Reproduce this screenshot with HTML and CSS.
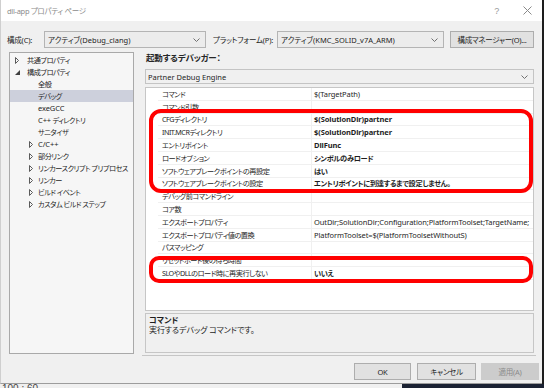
FILE: index.html
```html
<!DOCTYPE html>
<html lang="ja">
<head>
<meta charset="utf-8">
<title>dll-app プロパティ ページ</title>
<link rel="stylesheet" href="styles.css">
</head>
<body>
<div class="screen">
  <div class="dialog">
    <div class="titlebar">
      <span class="title">dll-app プロパティ ページ</span>
      <span class="help">?</span>
      <svg class="close" width="9" height="9" viewBox="0 0 9 9"><path d="M0.5 0.5 L8.5 8.5 M8.5 0.5 L0.5 8.5" stroke="#8a8a8a" stroke-width="1" fill="none"/></svg>
    </div>

    <div class="config">
      <span class="lbl lbl1">構成(C):</span>
      <div class="combo c1"><span class="cb">アクティブ(Debug_clang)</span><svg width="7" height="4" viewBox="0 0 7 4"><path d="M0.5 0.5 L3.5 3.5 L6.5 0.5" stroke="#707070" fill="none"/></svg></div>
      <span class="lbl lbl2">プラットフォーム(P):</span>
      <div class="combo c2"><span class="cb">アクティブ(KMC_SOLID_v7A_ARM)</span><svg width="7" height="4" viewBox="0 0 7 4"><path d="M0.5 0.5 L3.5 3.5 L6.5 0.5" stroke="#707070" fill="none"/></svg></div>
      <button class="btn mgr">構成マネージャー(O)...</button>
    </div>

    <div class="main">
      <div class="tree">
        <div class="ti l0"><span class="tw"><svg width="4" height="7" viewBox="0 0 4 7"><path d="M0.5 0.5 L3.5 3.5 L0.5 6.5 Z" stroke="#5a5a5a" fill="none"/></svg></span><span>共通プロパティ</span></div>
        <div class="ti l0"><span class="tw"><svg width="5" height="5" viewBox="0 0 5 5"><path d="M5 0 L5 5 L0 5 Z" fill="#404040"/></svg></span><span>構成プロパティ</span></div>
        <div class="ti leaf">全般</div>
        <div class="ti leaf sel">デバッグ</div>
        <div class="ti leaf"><span class="lt">exeGCC</span></div>
        <div class="ti leaf"><span class="lt">C++</span>&nbsp;ディレクトリ</div>
        <div class="ti leaf">サニタイザ</div>
        <div class="ti l1"><span class="tw"><svg width="4" height="7" viewBox="0 0 4 7"><path d="M0.5 0.5 L3.5 3.5 L0.5 6.5 Z" stroke="#5a5a5a" fill="none"/></svg></span><span class="lt">C/C++</span></div>
        <div class="ti l1"><span class="tw"><svg width="4" height="7" viewBox="0 0 4 7"><path d="M0.5 0.5 L3.5 3.5 L0.5 6.5 Z" stroke="#5a5a5a" fill="none"/></svg></span><span>部分リンク</span></div>
        <div class="ti l1"><span class="tw"><svg width="4" height="7" viewBox="0 0 4 7"><path d="M0.5 0.5 L3.5 3.5 L0.5 6.5 Z" stroke="#5a5a5a" fill="none"/></svg></span><span>リンカースクリプト プリプロセス</span></div>
        <div class="ti l1"><span class="tw"><svg width="4" height="7" viewBox="0 0 4 7"><path d="M0.5 0.5 L3.5 3.5 L0.5 6.5 Z" stroke="#5a5a5a" fill="none"/></svg></span><span>リンカー</span></div>
        <div class="ti l1"><span class="tw"><svg width="4" height="7" viewBox="0 0 4 7"><path d="M0.5 0.5 L3.5 3.5 L0.5 6.5 Z" stroke="#5a5a5a" fill="none"/></svg></span><span>ビルド イベント</span></div>
        <div class="ti l1"><span class="tw"><svg width="4" height="7" viewBox="0 0 4 7"><path d="M0.5 0.5 L3.5 3.5 L0.5 6.5 Z" stroke="#5a5a5a" fill="none"/></svg></span><span>カスタム ビルド ステップ</span></div>
      </div>

      <div class="right">
        <div class="heading">起動するデバッガー：</div>
        <div class="combo engine"><span class="lt wide">Partner Debug Engine</span><svg width="7" height="4" viewBox="0 0 7 4"><path d="M0.5 0.5 L3.5 3.5 L6.5 0.5" stroke="#707070" fill="none"/></svg></div>
        <div class="grid">
          <div class="rows">
            <div class="row"><span class="nm">コマンド</span><span class="vl lt">$(TargetPath)</span></div>
            <div class="row"><span class="nm">コマンド引数</span><span class="vl"></span></div>
            <div class="row"><span class="nm">CFGディレクトリ</span><span class="vl lt b">$(SolutionDir)partner</span></div>
            <div class="row"><span class="nm">INIT.MCRディレクトリ</span><span class="vl lt b">$(SolutionDir)partner</span></div>
            <div class="row"><span class="nm">エントリポイント</span><span class="vl lt b">DllFunc</span></div>
            <div class="row"><span class="nm">ロードオプション</span><span class="vl b">シンボルのみロード</span></div>
            <div class="row"><span class="nm">ソフトウェアブレークポイントの再設定</span><span class="vl b">はい</span></div>
            <div class="row"><span class="nm">ソフトウェアブレークポイントの設定</span><span class="vl b">エントリポイントに到達するまで設定しません。</span></div>
            <div class="row"><span class="nm">デバッグ前コマンドライン</span><span class="vl"></span></div>
            <div class="row"><span class="nm">コア数</span><span class="vl"></span></div>
            <div class="row"><span class="nm">エクスポートプロパティ</span><span class="vl lt">OutDir;SolutionDir;Configuration;PlatformToolset;TargetName;</span></div>
            <div class="row"><span class="nm">エクスポートプロパティ値の置換</span><span class="vl lt">PlatformToolset=$(PlatformToolsetWithoutS)</span></div>
            <div class="row"><span class="nm">パスマッピング</span><span class="vl"></span></div>
            <div class="row"><span class="nm">リセットボード後の待ち時間</span><span class="vl"></span></div>
            <div class="row"><span class="nm">SLOやDLLのロード時に再実行しない</span><span class="vl b">いいえ</span></div>
          </div>
          <div class="mark mark1"></div>
          <div class="mark mark2"></div>
        </div>
        <div class="desc">
          <div class="desc-title">コマンド</div>
          <div class="desc-text">実行するデバッグ コマンドです。</div>
        </div>
      </div>
    </div>

    <div class="buttons">
      <button class="btn ok">OK</button>
      <button class="btn cancel">キャンセル</button>
      <button class="btn apply" disabled>適用(A)</button>
    </div>
  </div>
  <div class="edge"></div>
</div>
<div class="strip">
  <div class="strip-left"><span>100 : 60</span></div>
  <div class="strip-right"></div>
</div>
</body>
</html>
```

FILE: styles.css
```css
* {
  box-sizing: border-box;
  margin: 0;
  padding: 0;
}

body {
  width: 544px;
  height: 388px;
  overflow: hidden;
  font-family: "Noto Sans", "Noto Sans CJK JP", sans-serif;
  font-size: 7.2px;
  letter-spacing: -0.5px;
  color: #1e1e1e;
  font-feature-settings: "palt";
  background: #f0f0f0;
}

.lt {
  font-size: 7.5px;
  letter-spacing: -0.1px;
}

.screen {
  display: flex;
  height: 384px;
}

.dialog {
  width: 542px;
  height: 384px;
  background: #f0f0f0;
  border-left: 1px solid #cfcfcf;
  border-bottom: 1px solid #9c9c9c;
  display: flex;
  flex-direction: column;
}

.edge {
  flex: 1;
  background: #1d1d1d;
}

/* title bar */
.titlebar {
  height: 21px;
  background: #ffffff;
  display: flex;
  align-items: center;
  padding-left: 6px;
  color: #8c8c8c;
  font-size: 7.5px;
  letter-spacing: -0.3px;
}

.title {
  flex: 1;
}

.help {
  font-family: "Liberation Sans", sans-serif;
  font-size: 9px;
  color: #9a9a9a;
  margin-right: 24px;
}

.close {
  margin-right: 10px;
}

/* configuration row */
.config {
  display: flex;
  align-items: center;
  height: 17px;
  margin-top: 10px;
  padding-left: 6px;
  font-size: 7.5px;
  letter-spacing: -0.2px;
}

.lbl {
  white-space: nowrap;
}

.lbl1 {
  width: 37px;
}

.lbl2 {
  width: 64px;
  margin-left: 7px;
}

.combo {
  height: 17px;
  border: 1px solid #b4b4b4;
  background: #ececec;
  display: flex;
  align-items: center;
  justify-content: space-between;
  padding: 0 5px 0 3px;
  white-space: nowrap;
}

.cb {
  font-size: 7.5px;
  letter-spacing: 0;
}

.c1 {
  width: 162px;
}

.c2 {
  width: 167px;
}

.btn {
  font-family: inherit;
  font-size: 7.5px;
  letter-spacing: -0.3px;
  font-feature-settings: "palt";
  color: #1e1e1e;
  background: #e1e1e1;
  border: 1px solid #adadad;
  height: 17px;
  white-space: nowrap;
}

.mgr {
  width: 84px;
  margin-left: 6px;
}

/* main area */
.main {
  display: flex;
  margin-top: 4px;
  height: 304px;
}

.tree {
  margin-left: 8px;
  width: 125px;
  height: 302px;
  border: 1px solid #a9a9a9;
  background: #f6f6f6;
  padding-top: 1px;
}

.ti {
  height: 12px;
  display: flex;
  align-items: center;
  white-space: nowrap;
}

.ti .tw {
  display: flex;
  align-items: center;
}

.l0 .tw {
  margin-left: 5px;
  width: 12px;
}

.l1 .tw {
  margin-left: 19px;
  width: 9px;
}

.leaf {
  padding-left: 28px;
}

.sel {
  background: #cdd0dc;
}

.right {
  margin-left: 8px;
  width: 394px;
  height: 304px;
  border-bottom: 1px solid #c6c6c6;
  padding: 0 2px 0 3px;
  display: flex;
  flex-direction: column;
}

.heading {
  height: 12px;
  line-height: 12px;
  font-size: 8.5px;
  letter-spacing: -0.2px;
  font-weight: 700;
  padding-left: 1px;
  color: #262626;
}

.engine {
  margin-top: 5px;
  height: 15px;
  background: #f0f0f0;
  border-color: #c4c4c4;
  padding-left: 2px;
}

.wide {
  letter-spacing: 0;
}

/* property grid */
.grid {
  position: relative;
  margin-top: 3px;
  height: 224px;
  border: 1px solid #c6c6c6;
  background: #ffffff;
  overflow: hidden;
}

.rows {
  padding-left: 12px;
}

.row {
  display: grid;
  grid-template-columns: 153px 1fr;
  height: 12.8px;
  border-bottom: 1px solid #f0f0f0;
  align-items: center;
  white-space: nowrap;
}

.nm {
  padding-left: 4px;
  overflow: hidden;
}

.vl {
  padding-left: 2px;
  overflow: hidden;
  height: 100%;
  display: flex;
  align-items: center;
  border-left: 1px solid #f0f0f0;
}

.b {
  font-weight: 700;
  letter-spacing: -0.3px;
}

.lt.b {
  letter-spacing: -0.1px;
}

.mark {
  position: absolute;
  border: 4px solid #ff0000;
  pointer-events: none;
}

.mark1 {
  left: 3px;
  top: 21px;
  width: 384px;
  height: 84px;
  border-radius: 12px;
}

.mark2 {
  left: 3px;
  top: 168px;
  width: 384px;
  height: 27px;
  border-radius: 10px;
}

/* description */
.desc {
  margin-top: 2px;
  height: 40px;
  border: 1px solid #c6c6c6;
  background: #f0f0f0;
  padding: 0 3px;
  font-size: 8px;
  letter-spacing: -0.1px;
}

.desc-title {
  font-weight: 700;
  line-height: 10px;
  margin-top: 1px;
}

.desc-text {
  line-height: 10px;
}

/* buttons */
.buttons {
  display: flex;
  justify-content: flex-end;
  margin-top: 7px;
  padding-right: 3px;
}

.ok {
  width: 57px;
}

.cancel {
  width: 59px;
  margin-left: 6px;
}

.apply {
  width: 58px;
  margin-left: 5px;
  background: #cccccc;
  border-color: #cccccc;
  color: #8a8a8a;
}

/* below the dialog */
.strip {
  display: flex;
  height: 4px;
  overflow: hidden;
}

.strip-left {
  width: 402px;
  background: #f0f0f0;
  padding-left: 2px;
  font-family: "Liberation Sans", sans-serif;
  font-size: 10px;
  line-height: 10px;
  letter-spacing: 0;
  color: #444;
}

.strip-right {
  flex: 1;
  background: #1b2233;
}
```
